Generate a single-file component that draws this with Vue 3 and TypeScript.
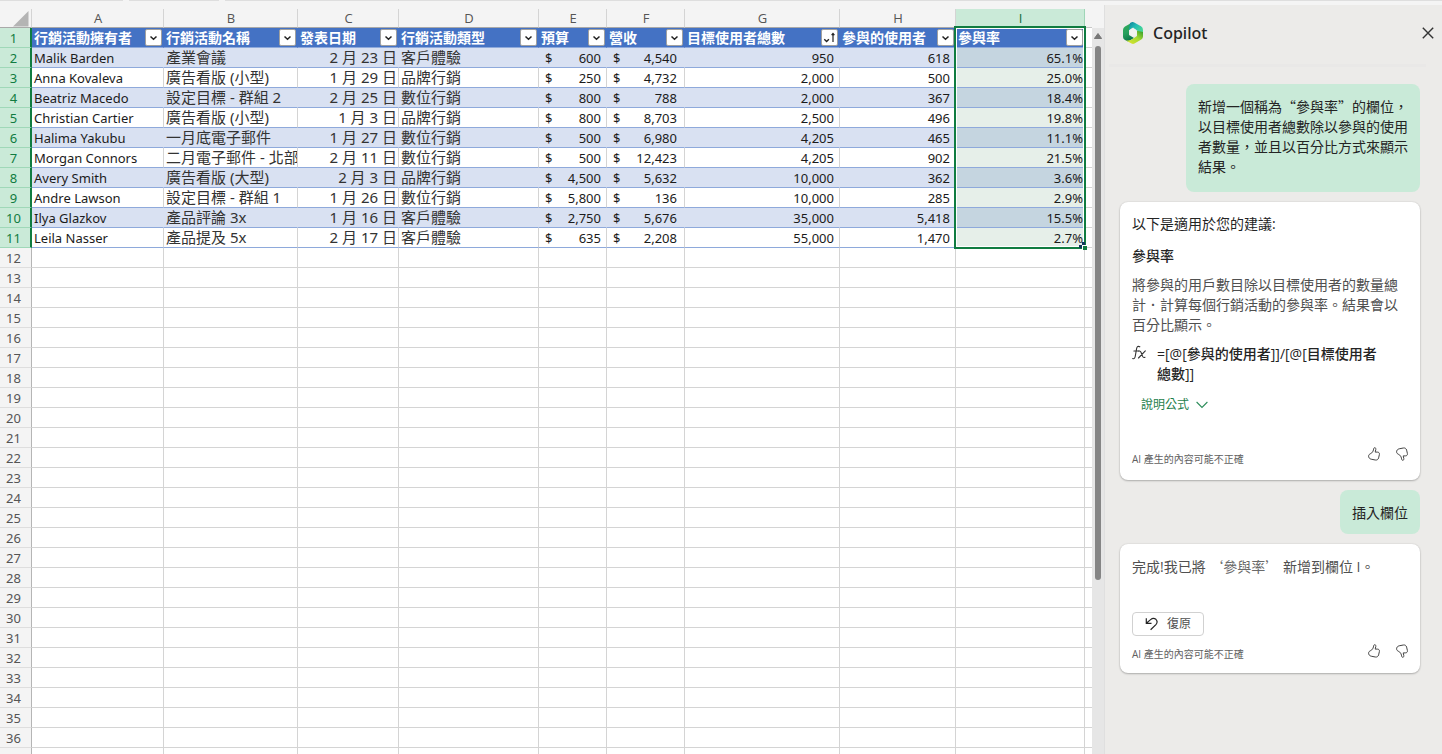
<script setup lang="ts">
interface Column {
  letter: string
  title: string
  kind: 'text' | 'date' | 'money' | 'number' | 'rate'
  sorted?: boolean
}

const columns: Column[] = [
  { letter: 'A', title: '行銷活動擁有者', kind: 'text' },
  { letter: 'B', title: '行銷活動名稱', kind: 'text' },
  { letter: 'C', title: '發表日期', kind: 'date' },
  { letter: 'D', title: '行銷活動類型', kind: 'text' },
  { letter: 'E', title: '預算', kind: 'money' },
  { letter: 'F', title: '營收', kind: 'money' },
  { letter: 'G', title: '目標使用者總數', kind: 'number', sorted: true },
  { letter: 'H', title: '參與的使用者', kind: 'number' },
  { letter: 'I', title: '參與率', kind: 'rate' },
]

const records: string[][] = [
  ['Malik Barden', '產業會議', '2 月 23 日', '客戶體驗', '600', '4,540', '950', '618', '65.1%'],
  ['Anna Kovaleva', '廣告看版 (小型)', '1 月 29 日', '品牌行銷', '250', '4,732', '2,000', '500', '25.0%'],
  ['Beatriz Macedo', '設定目標 - 群組 2', '2 月 25 日', '數位行銷', '800', '788', '2,000', '367', '18.4%'],
  ['Christian Cartier', '廣告看版 (小型)', '1 月 3 日', '品牌行銷', '800', '8,703', '2,500', '496', '19.8%'],
  ['Halima Yakubu', '一月底電子郵件', '1 月 27 日', '數位行銷', '500', '6,980', '4,205', '465', '11.1%'],
  ['Morgan Connors', '二月電子郵件 - 北部', '2 月 11 日', '數位行銷', '500', '12,423', '4,205', '902', '21.5%'],
  ['Avery Smith', '廣告看版 (大型)', '2 月 3 日', '品牌行銷', '4,500', '5,632', '10,000', '362', '3.6%'],
  ['Andre Lawson', '設定目標 - 群組 1', '1 月 26 日', '數位行銷', '5,800', '136', '10,000', '285', '2.9%'],
  ['Ilya Glazkov', '產品評論 3x', '1 月 16 日', '客戶體驗', '2,750', '5,676', '35,000', '5,418', '15.5%'],
  ['Leila Nasser', '產品提及 5x', '2 月 17 日', '客戶體驗', '635', '2,208', '55,000', '1,470', '2.7%'],
]

// Numbered empty rows, then one partly visible row at the bottom edge.
const emptyRows: (number | '')[] = [...Array.from({ length: 25 }, (_, i) => i + 12), '']
</script>

<template>
  <div class="app" lang="zh-Hant">
    <div class="ribbon-edge"><span class="seg s1"></span><span class="seg s2"></span><span class="seg s3"></span></div>
    <div class="workspace">
      <main class="sheet">
        <table class="grid">
          <colgroup>
            <col class="c-head" />
            <col v-for="c in columns" :key="c.letter" :class="'c-' + c.letter" />
            <col />
          </colgroup>
          <thead>
            <tr>
              <th class="corner">
                <svg width="16" height="16" viewBox="0 0 16 16" aria-hidden="true"><path d="M15.5 0V15.5H0Z" fill="#b4b4b4" /></svg>
              </th>
              <th v-for="c in columns" :key="c.letter" scope="col" :class="{ picked: c.letter === 'I' }">{{ c.letter }}</th>
              <th class="filler"></th>
            </tr>
          </thead>
          <tbody>
            <tr class="titles">
              <th scope="row" class="num active">1</th>
              <td v-for="c in columns" :key="c.letter" :class="{ anchor: c.letter === 'I' }">
                <div class="title">
                  <span>{{ c.title }}</span>
                  <button type="button" class="filter" :aria-label="'篩選 ' + c.title">
                    <svg v-if="c.sorted" width="15" height="15" viewBox="0 0 15 15" aria-hidden="true">
                      <path d="M2.3 9.3L4.6 11.5L6.9 9.3" fill="none" stroke="#222" stroke-width="1.400" />
                      <path d="M11 12V3.500M9.600 5.200L11 3.500L12.400 5.200" fill="none" stroke="#222" stroke-width="1.200" />
                    </svg>
                    <svg v-else width="15" height="15" viewBox="0 0 15 15" aria-hidden="true">
                      <path d="M4.500 6.500L7.500 9.300L10.500 6.500" fill="none" stroke="#222" stroke-width="1.500" />
                    </svg>
                  </button>
                </div>
                <div v-if="c.letter === 'I'" class="selection">
                  <span class="table-corner"></span>
                  <span class="handle"></span>
                </div>
              </td>
              <td class="filler"></td>
            </tr>
            <tr v-for="(r, i) in records" :key="r[0]" :class="['record', { band: i % 2 === 0 }]">
              <th scope="row" class="num active">{{ i + 2 }}</th>
              <td v-for="(v, j) in r" :key="j" :class="[columns[j].kind, 'col-' + columns[j].letter, { cjk: j > 0 && j < 4 }]">
                <div v-if="columns[j].kind === 'money'" class="money-cell"><span>$</span><span>{{ v }}</span></div>
                <template v-else>{{ v }}</template>
              </td>
              <td class="filler"></td>
            </tr>
            <tr v-for="n in emptyRows" :key="n">
              <th scope="row" class="num">{{ n }}</th>
              <td v-for="c in columns" :key="c.letter"></td>
              <td class="filler"></td>
            </tr>
          </tbody>
        </table>
      </main>

      <div class="scrollbar" aria-hidden="true">
        <div class="track">
          <svg width="8" height="6" viewBox="0 0 8 6"><path d="M4 0.500L7.600 5.500H0.400Z" fill="#777" stroke="#777" stroke-linejoin="round" /></svg>
          <div class="thumb"></div>
        </div>
      </div>

      <aside class="copilot">
        <header class="pane-head">
          <svg class="logo" width="22" height="24" viewBox="0 0 22 24" aria-hidden="true">
            <defs>
              <linearGradient id="lgLeft" x1="0" y1="0" x2="0.300" y2="1"><stop offset="0" stop-color="#2fae5c" /><stop offset="0.600" stop-color="#27a05c" /><stop offset="1" stop-color="#0d7a4c" /></linearGradient>
              <linearGradient id="lgTop" x1="0" y1="0" x2="1" y2="0.800"><stop offset="0" stop-color="#0f7f9a" /><stop offset="0.450" stop-color="#22bdb5" /><stop offset="1" stop-color="#4fdc8c" /></linearGradient>
              <linearGradient id="lgBottom" x1="0" y1="1" x2="1" y2="0"><stop offset="0" stop-color="#e3e62f" /><stop offset="0.550" stop-color="#a5d930" /><stop offset="1" stop-color="#2f9a2c" /></linearGradient>
            </defs>
            <path d="M11 1L3 5.500Q1 6.700 1 9V16Q1 18 3 19L6 20.500L12 17L7 14V9L11 6Z" fill="url(#lgLeft)" />
            <path d="M8 2L10.200 1.100Q11.200 0.800 12.200 1.400L19 5.300Q21 6.500 21 9V13L15 9.500L11 6.500L7 9Z" fill="url(#lgTop)" />
            <path d="M21 11V15.500Q21 17.500 19.300 18.500L12.500 22.500Q11 23.300 9.500 22.500L4 19.500Q8 20 10.500 18L15 15V9.700Z" fill="url(#lgBottom)" />
            <path d="M9.600 7.800L13.300 8.300L15 11L14 14.300L10.700 15.500L7.500 13.300V10Z" fill="#f1f3f0" />
          </svg>
          <h1>Copilot</h1>
          <button type="button" class="close" aria-label="關閉">
            <svg width="12" height="12" viewBox="0 0 12 12" aria-hidden="true"><path d="M0.800 0.800L11.200 11.200M11.200 0.800L0.800 11.200" stroke="#333" stroke-width="1.400" fill="none" /></svg>
          </button>
        </header>
        <div class="divider"></div>

        <div class="chat">
          <p class="bubble ask">新增一個稱為“參與率”的欄位，以目標使用者總數除以參與的使用者數量，並且以百分比方式來顯示結果。</p>

          <article class="card">
            <p>以下是適用於您的建議:</p>
            <h2>參與率</h2>
            <p class="soft detail">將參與的用戶數目除以目標使用者的數量總計．計算每個行銷活動的參與率。結果會以百分比顯示。</p>
            <div class="formula">
              <svg width="14" height="18" viewBox="0 0 14 18" aria-hidden="true">
                <path d="M7.800 2.800Q5.200 1.400 4.600 4.600L3.200 12.500Q2.700 15.300 0.700 14.600M1.900 7H6.700" fill="none" stroke="#333" stroke-width="1.100" stroke-linecap="round" />
                <path d="M6.900 7.100Q8.300 6.600 9 8.200L10.600 12.400Q11.300 14 13 13.300M13.300 6.900L6.500 14" fill="none" stroke="#333" stroke-width="1.100" stroke-linecap="round" />
              </svg>
              <code>=[@[參與的使用者]]/[@[目標使用者總數]]</code>
            </div>
            <button type="button" class="explain">
              說明公式
              <svg width="12" height="8" viewBox="0 0 12 8" aria-hidden="true"><path d="M0.600 1L6 6.400L11.400 1" fill="none" stroke="#2c8c5a" stroke-width="1.100" /></svg>
            </button>
            <footer class="foot">
              <small>AI 產生的內容可能不正確</small>
              <div class="votes">
                <button type="button" aria-label="喜歡"><svg width="12" height="14" viewBox="0 0 12 14" aria-hidden="true"><path class="thumb-line" d="M6.600 0.700C7.600 0.600 8 1.500 7.800 2.500L7.200 5.100H9.300C10.900 5.100 11.700 6.200 11.400 7.500L10.600 10.900C10.200 12.500 8.900 13.300 7.300 13L3.200 12.200C1.600 11.800 0.600 10.700 0.600 9.200C0.600 7.800 1.500 7.100 2.800 6.500C4.300 5.700 5 4.600 5.400 3C5.700 1.800 5.700 0.800 6.600 0.700Z" /></svg></button>
                <button type="button" class="down" aria-label="不喜歡"><svg width="12" height="14" viewBox="0 0 12 14" aria-hidden="true"><path class="thumb-line" d="M6.600 0.700C7.600 0.600 8 1.500 7.800 2.500L7.200 5.100H9.300C10.900 5.100 11.700 6.200 11.400 7.500L10.600 10.900C10.200 12.500 8.900 13.300 7.300 13L3.200 12.200C1.600 11.800 0.600 10.700 0.600 9.200C0.600 7.800 1.500 7.100 2.800 6.500C4.300 5.700 5 4.600 5.400 3C5.700 1.800 5.700 0.800 6.600 0.700Z" /></svg></button>
              </div>
            </footer>
          </article>

          <p class="bubble">插入欄位</p>

          <article class="card done">
            <p class="soft">完成!我已將 <span class="quoted">‘參與率’</span> 新增到欄位 I。</p>
            <button type="button" class="undo">
              <svg width="14" height="14" viewBox="0 0 14 14" aria-hidden="true"><path d="M1.300 1.300V6.300H6.500M1.600 6L5.600 2.600Q8.300 0.400 10.900 2.300Q13.300 4.800 10.900 7.600L5.600 12.700" fill="none" stroke="#242424" stroke-width="1.200" /></svg>
              復原
            </button>
            <footer class="foot">
              <small>AI 產生的內容可能不正確</small>
              <div class="votes">
                <button type="button" aria-label="喜歡"><svg width="12" height="14" viewBox="0 0 12 14" aria-hidden="true"><path class="thumb-line" d="M6.600 0.700C7.600 0.600 8 1.500 7.800 2.500L7.200 5.100H9.300C10.900 5.100 11.700 6.200 11.400 7.500L10.600 10.900C10.200 12.500 8.900 13.300 7.300 13L3.200 12.200C1.600 11.800 0.600 10.700 0.600 9.200C0.600 7.800 1.500 7.100 2.800 6.500C4.300 5.700 5 4.600 5.400 3C5.700 1.800 5.700 0.800 6.600 0.700Z" /></svg></button>
                <button type="button" class="down" aria-label="不喜歡"><svg width="12" height="14" viewBox="0 0 12 14" aria-hidden="true"><path class="thumb-line" d="M6.600 0.700C7.600 0.600 8 1.500 7.800 2.500L7.200 5.100H9.300C10.900 5.100 11.700 6.200 11.400 7.500L10.600 10.900C10.200 12.500 8.900 13.300 7.300 13L3.200 12.200C1.600 11.800 0.600 10.700 0.600 9.200C0.600 7.800 1.500 7.100 2.800 6.500C4.300 5.700 5 4.600 5.400 3C5.700 1.800 5.700 0.800 6.600 0.700Z" /></svg></button>
              </div>
            </footer>
          </article>
        </div>
      </aside>
    </div>
  </div>
</template>

<style>
body {
  margin: 0;
  overflow: hidden;
}
</style>

<style scoped>
.app {
  display: flex;
  flex-direction: column;
  height: 100vh;
  background: #f4f4f4;
  color: #242424;
  font-family: "Open Sans", "Noto Sans CJK TC", sans-serif;
  font-size: 14px;
  line-height: 20px;
}
button {
  font: inherit;
  color: inherit;
  padding: 0;
  border: 0;
  background: none;
  display: flex;
  align-items: center;
}
svg {
  display: block;
  flex: none;
}
h1, h2, p {
  margin: 0;
}
.ribbon-edge {
  display: flex;
  gap: 6px;
  height: 5px;
}
.seg {
  height: 1px;
  background: #dedede;
}
.s1 { width: 123px; }
.s2 { width: 90px; }
.s3 { flex: 1; }
.workspace {
  flex: 1;
  min-height: 0;
  display: flex;
}

/* Worksheet */
.sheet {
  flex: 1;
  min-width: 0;
  padding-top: 4px;
  overflow: hidden;
}
.grid {
  width: 100%;
  table-layout: fixed;
  border-collapse: separate;
  border-spacing: 0;
  font-family: "Noto Sans", "Noto Sans CJK TC", sans-serif;
  font-size: 13px;
  line-height: 18px;
  color: #1b1b1b;
}
.c-head { width: 32px; }
.c-A { width: 132px; }
.c-B { width: 134px; }
.c-C { width: 101px; }
.c-D { width: 140px; }
.c-E { width: 68px; }
.c-F { width: 78px; }
.c-G { width: 155px; }
.c-H { width: 116px; }
.c-I { width: 129px; }
.grid th, .grid td {
  box-sizing: border-box;
  height: 20px;
  padding: 1px 3px 0 2px;
  border-right: 1px solid #d4d4d4;
  border-bottom: 1px solid #d4d4d4;
  white-space: nowrap;
  overflow: hidden;
  font-weight: 400;
}
.grid td {
  background: #fff;
}
.grid thead th {
  height: 19px;
  line-height: 17px;
  padding: 1px 0 0 1px;
  font-family: "Open Sans", sans-serif;
  color: #555;
  border-bottom-color: #a9a9a9;
}
.grid thead th.picked {
  background: #caead8;
  color: #0e6b38;
  border-right-color: #9fd5b7;
}
.grid .filler {
  border-right: 0;
}
.grid thead th.filler {
  border-bottom-color: #c8c8c8;
}
.corner svg {
  margin: 0 2px 0 auto;
}
.grid .num {
  padding: 1px 4px 0 0;
  text-align: center;
  color: #555;
  border-right-color: #b5b5b5;
  border-bottom-color: #dedede;
}
.grid .num.active {
  padding-right: 3px;
  background: #caead8;
  color: #107c41;
  border-right: 2px solid #107c41;
  border-bottom-color: #9fd8b8;
}
.grid .titles td:not(.filler) {
  padding: 0 1px 0 2px;
  background: #4472c4;
  border-right-color: #4472c4;
  border-bottom-color: #8ea9db;
  color: #fff;
  font-size: 14px;
  font-weight: 700;
}
.title {
  display: flex;
  align-items: center;
  justify-content: space-between;
}
.filter {
  flex: none;
  box-sizing: border-box;
  width: 17px;
  height: 17px;
  background: #fff;
  border: 1px solid #a0a0a0;
  border-radius: 2px;
}
.grid .anchor {
  position: relative;
  overflow: visible;
}
.selection {
  position: absolute;
  z-index: 1;
  top: -2px;
  left: -2px;
  right: -2px;
  height: 219px;
  border: 2px solid #107c41;
  box-shadow: inset 0 0 0 1px #fff;
  pointer-events: none;
}
.table-corner {
  position: absolute;
  right: -1px;
  bottom: -1px;
  width: 3px;
  height: 3px;
  border: solid #10375c;
  border-width: 0 3px 3px 0;
}
.handle {
  position: absolute;
  right: -3px;
  bottom: -3px;
  width: 4px;
  height: 4px;
  background: #107c41;
  border: solid #fff;
  border-width: 1px 0 0 1px;
}
.grid .record td:not(.filler) {
  border-bottom-color: #8ea9db;
}
.grid .band td:not(.filler) {
  background: #d9e1f2;
  border-right-color: #d9e1f2;
}
.grid .record td.cjk {
  padding-top: 0;
  line-height: 19px;
  font-size: 15px;
  color: #333;
}
.grid .record td.date {
  padding-right: 1px;
  text-align: right;
}
.grid .record td.money {
  padding: 1px 5px 0 6px;
}
.grid .record td.col-F {
  padding-right: 7px;
}
.money-cell {
  display: flex;
  justify-content: space-between;
}
.grid .record td.number {
  padding-right: 5px;
  text-align: right;
}
.grid .record td.rate {
  padding-right: 1px;
  text-align: right;
  background: #e6efe9;
}
.grid .band td.rate.rate {
  background: #c5d5e0;
}

/* Scrollbar */
.scrollbar {
  flex: none;
  width: 12px;
  padding-top: 23px;
  display: flex;
}
.track {
  flex: 1;
  display: flex;
  flex-direction: column;
  align-items: center;
  gap: 7px;
  padding-top: 5px;
  background: #e6e6e6;
}
.thumb {
  width: 6px;
  height: 74%;
  border-radius: 3px;
  background: #858585;
}

/* Copilot pane */
.copilot {
  flex: none;
  box-sizing: border-box;
  width: 338px;
  background: #ecebe9;
  border-left: 1px solid #dfdfdf;
}
.pane-head {
  display: flex;
  align-items: center;
  gap: 9px;
  height: 55px;
  padding: 0 8px 0 17px;
}
.divider {
  height: 3px;
  margin: 4px 16px 0 4px;
  background: #e9e8e7;
}
.pane-head h1 {
  flex: 1;
  font-family: "Noto Sans", sans-serif;
  font-size: 16px;
  font-weight: 500;
  line-height: 24px;
}
.chat {
  display: flex;
  flex-direction: column;
  gap: 10px;
  padding: 17px 22px 0 15px;
}
.bubble {
  align-self: flex-end;
  box-sizing: border-box;
  max-width: 234px;
  padding: 12px;
  background: #c9ead8;
  border-radius: 8px;
  font-family: "Noto Sans CJK TC", "Noto Sans", sans-serif;
}
.ask {
  padding-bottom: 16px;
}
.card {
  display: flex;
  flex-direction: column;
  align-items: flex-start;
  padding: 12px;
  background: #fff;
  border-radius: 8px;
  box-shadow: 0 1px 2px rgba(0, 0, 0, 0.24), 0 0 2px rgba(0, 0, 0, 0.12);
}
.card h2 {
  margin: 12px 0 9px;
  font-size: 14px;
  font-weight: 500;
  line-height: 20px;
}
.soft {
  color: #505050;
}
.formula {
  display: flex;
  align-items: flex-start;
  gap: 11px;
  margin-top: 9px;
  padding-right: 20px;
}
.formula code {
  font-family: inherit;
  font-weight: 500;
}
.explain {
  gap: 7px;
  margin: 11px 0 0 9px;
  font-size: 12px;
  color: #1f7f4c;
}
.foot {
  align-self: stretch;
  display: flex;
  justify-content: space-between;
  align-items: flex-start;
  margin-top: 32px;
}
.foot small {
  padding-top: 3px;
  font-size: 10px;
  line-height: 18px;
  color: #606060;
}
.done {
  padding-bottom: 10px;
}
.done .foot {
  margin-top: 8px;
}
.done small {
  padding-top: 1px;
}
.votes {
  display: flex;
  gap: 16px;
}
.down svg {
  transform: scaleY(-1);
}
.thumb-line {
  fill: none;
  stroke: #444;
  stroke-width: 1;
}
.quoted {
  font-family: "Noto Sans CJK TC", sans-serif;
  color: #6a6a6a;
}
.undo {
  gap: 8px;
  box-sizing: border-box;
  height: 24px;
  margin-top: 35px;
  padding: 0 12px;
  border: 1px solid #d1d1d1;
  border-radius: 4px;
  font-size: 12px;
  color: #505050;
}
</style>
